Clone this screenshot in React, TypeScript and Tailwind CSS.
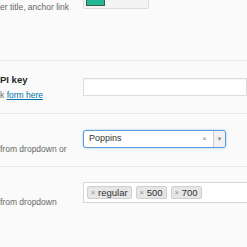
import React from 'react';

const Row = ({ label, children, className }: { label: React.ReactNode; children: React.ReactNode; className: string }) => (
  <div className={`flex border-b border-[#e8e8e8] ${className}`}>
    <div className="w-[83px] shrink-0 overflow-hidden">{label}</div>
    <div className="flex-1 min-w-0">{children}</div>
  </div>
);

const Tag = ({ text }: { text: string }) => (
  <span className="flex items-center h-[13px] px-[3px] gap-[3px] border border-[#cfcfcf] bg-[#e6e6e6] rounded-[2px] text-[9.5px] leading-none text-[#333]">
    <span className="text-[7px] text-[#888]">×</span>
    {text}
  </span>
);

const App = () => {
  return (
    <div className="w-[247px] h-[247px] overflow-hidden bg-[#fafafa] font-['Liberation_Sans',Arial,sans-serif]">
      <Row className="h-[61px]" label={
        <p className="pt-[1px] text-[8.5px] leading-[12px] text-[#666] whitespace-nowrap">er title, anchor link</p>
      }>
        <div className="w-[66px] h-[9px] border border-t-0 border-[#dcdcdc] bg-[#f4f4f4] rounded-b-[2px] pl-[2px]">
          <div className="w-[19px] h-[6px] bg-[#22b894] border border-t-0 border-[#3c5a52]"></div>
        </div>
      </Row>

      <Row className="h-[53px]" label={
        <div className="pt-[13px] whitespace-nowrap">
          <p className="text-[9.5px] leading-[12px] font-bold text-[#23282d]">PI key</p>
          <p className="mt-[3px] text-[8.5px] leading-[12px] text-[#666]">
            k <a href="#" className="text-[#0073aa] underline">form here</a>
          </p>
        </div>
      }>
        <div className="pt-[17px]">
          <div className="h-[18px] border border-[#dedede] bg-white shadow-[inset_0_1px_2px_rgba(0,0,0,0.05)]"></div>
        </div>
      </Row>

      <Row className="h-[53px]" label={
        <p className="pt-[29px] text-[8.5px] leading-[12px] text-[#666] whitespace-nowrap">from dropdown or</p>
      }>
        <div className="pt-[16px]">
          <div className="w-[143px] h-[18px] flex items-center border border-[#5b9dd9] rounded-[3px] bg-white shadow-[0_0_2px_rgba(30,140,190,0.5)]">
            <span className="flex-1 pl-[5px] text-[9px] text-[#333]">Poppins</span>
            <span className="w-[11px] text-[8px] text-[#888] leading-none">×</span>
            <span className="w-[12px] h-full flex items-center justify-center border-l border-[#ccc] bg-[#f1f1f1] rounded-r-[3px] text-[6px] text-[#888]">▼</span>
          </div>
        </div>
      </Row>

      <div className="flex">
        <div className="w-[83px] shrink-0 overflow-hidden">
          <p className="pt-[29px] text-[8.5px] leading-[12px] text-[#666] whitespace-nowrap">from dropdown</p>
        </div>
        <div className="flex-1 pt-[15px]">
          <div className="h-[21px] flex items-center gap-[4px] pl-[3px] border border-r-0 border-[#d6d6d6] bg-white">
            <Tag text="regular" />
            <Tag text="500" />
            <Tag text="700" />
          </div>
        </div>
      </div>
    </div>
  );
};

export default App;
